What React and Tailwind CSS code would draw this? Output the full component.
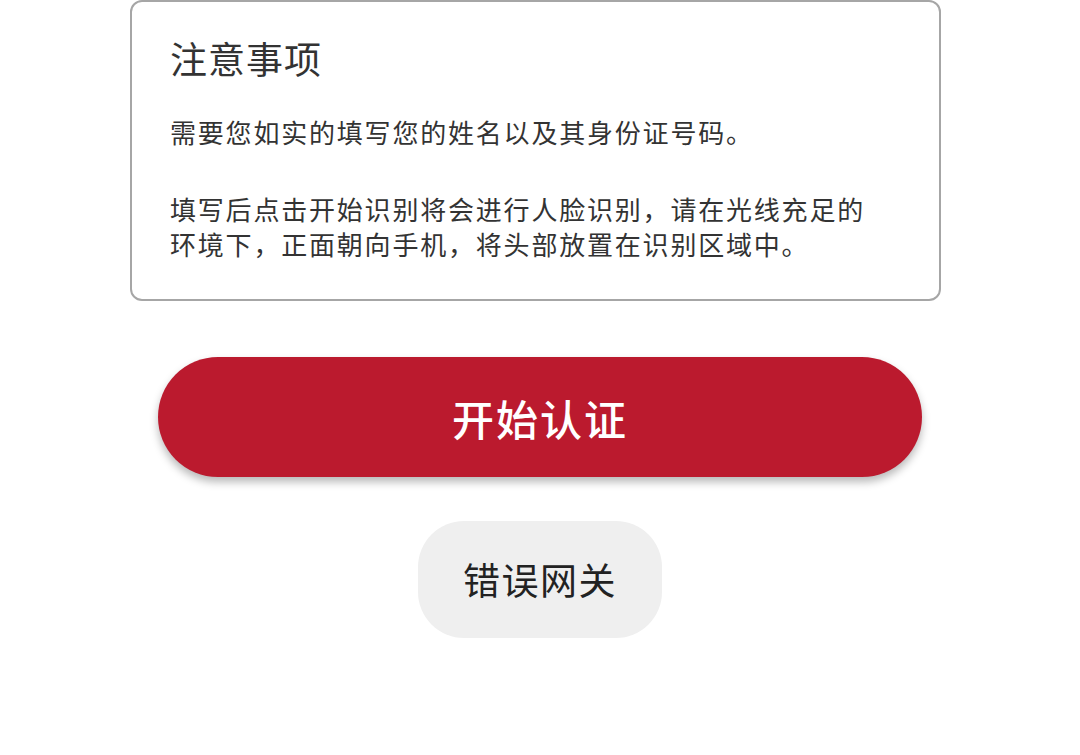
export default function App() {
  const font = { fontFamily: '"Noto Sans CJK SC", "Noto Sans", sans-serif' }
  return (
    <div className="w-[1080px] h-[755px] bg-white overflow-hidden" style={font}>
      {/* 注意事项 card */}
      <div className="ml-[130px] w-[811px] h-[301px] border-2 border-[#a6a6a6] rounded-[12px] pl-[38px] pr-[60px] pt-[32px]">
        <h2 className="text-[37px] leading-[48px] tracking-[1px] text-[#333]">注意事项</h2>
        <p className="mt-[32px] text-[26px] leading-[35px] tracking-[1.8px] text-[#333]">
          需要您如实的填写您的姓名以及其身份证号码。
        </p>
        <p className="mt-[42px] text-[26px] leading-[35px] tracking-[1.8px] text-[#333]">
          填写后点击开始识别将会进行人脸识别，请在光线充足的环境下，正面朝向手机，将头部放置在识别区域中。
        </p>
      </div>

      {/* 开始认证 */}
      <div className="flex justify-center mt-[56px]">
        <button className="w-[764px] h-[120px] rounded-full bg-[#bb1a2e] text-white text-[42px] font-medium tracking-[2px] shadow-[0_5px_8px_rgba(0,0,0,0.28)]">
          开始认证
        </button>
      </div>

      {/* 错误网关 */}
      <div className="flex justify-center mt-[44px]">
        <button className="w-[244px] h-[117px] rounded-[46px] bg-[#efefef] text-[#222] text-[37px] tracking-[1.5px]">
          错误网关
        </button>
      </div>
    </div>
  )
}
